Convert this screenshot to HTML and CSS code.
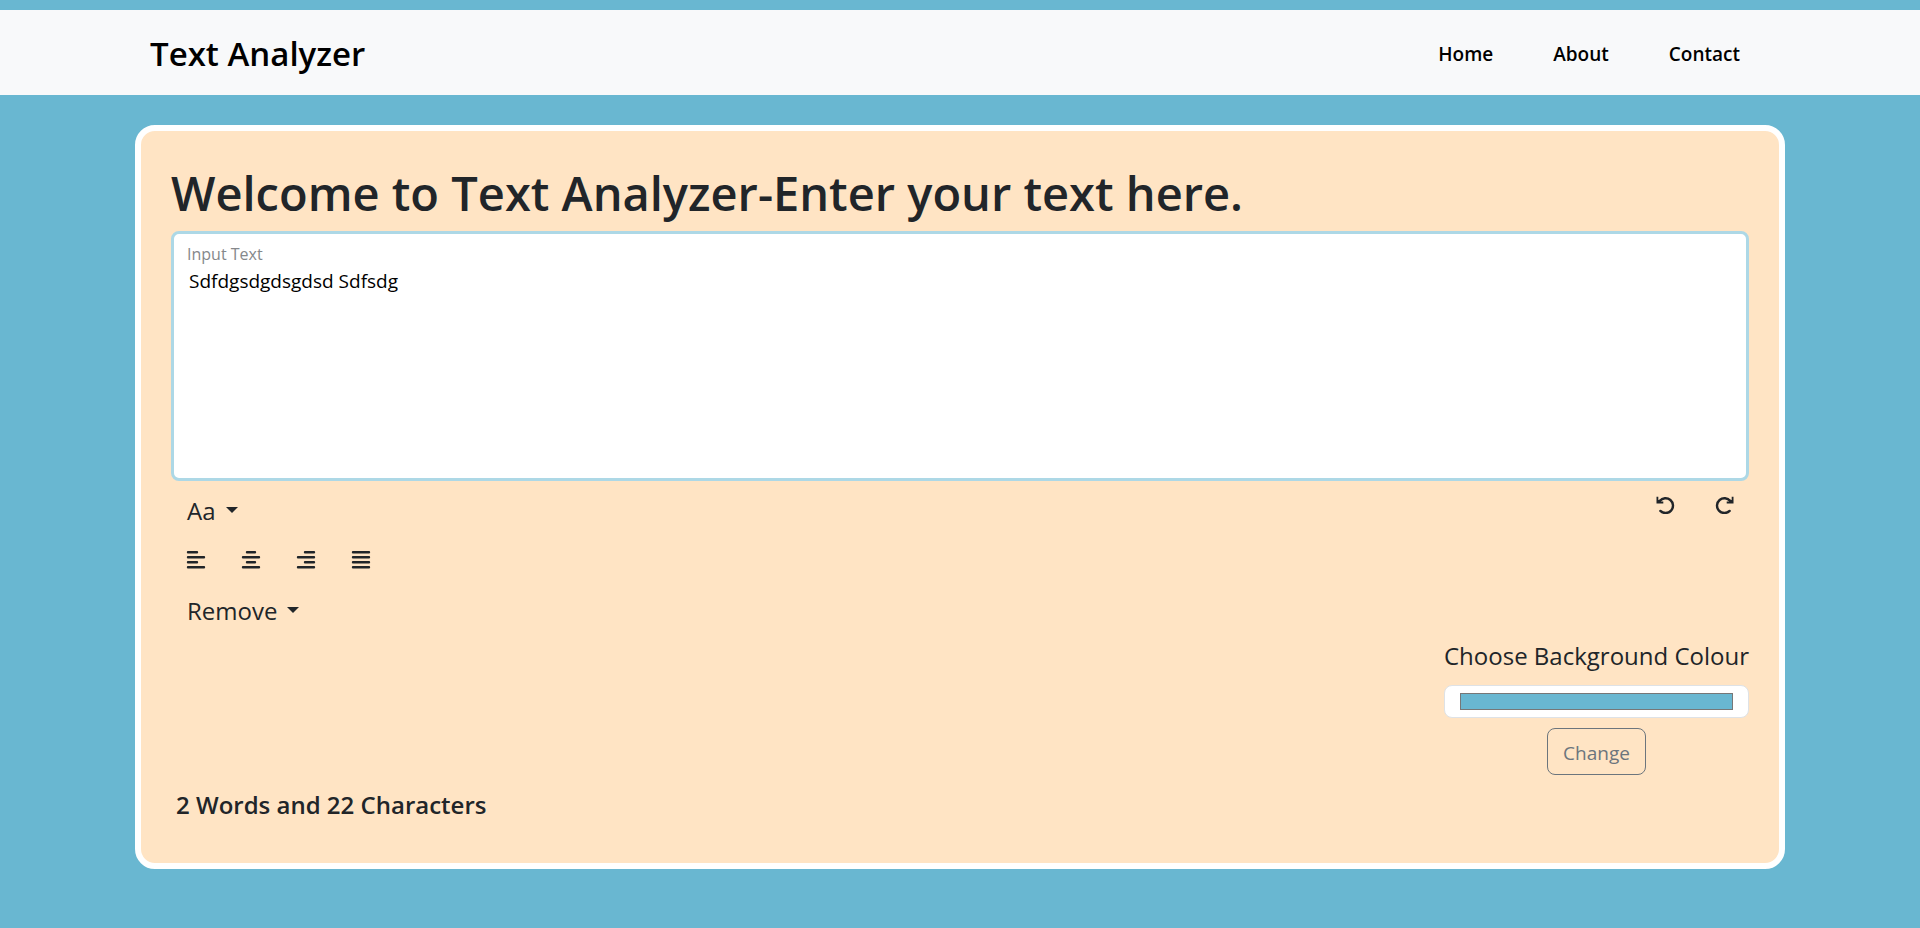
FILE: index.html
```html
<!DOCTYPE html>
<html lang="en">
<head>
<meta charset="utf-8">
<meta name="viewport" content="width=device-width, initial-scale=1">
<title>Text Analyzer</title>
<link rel="stylesheet" href="styles.css">
</head>
<body>
<header class="navbar">
  <div class="container navbar-inner">
    <a class="brand" href="#">Text Analyzer</a>
    <nav class="nav-links">
      <a href="#">Home</a>
      <a href="#">About</a>
      <a href="#">Contact</a>
    </nav>
  </div>
</header>
<main class="container card">
  <h1 class="title">Welcome to Text Analyzer-Enter your text here.</h1>
  <div class="editor">
    <label class="editor-label" for="text">Input Text</label>
    <textarea class="editor-text" id="text" spellcheck="false">Sdfdgsdgdsgdsd Sdfsdg</textarea>
  </div>
  <div class="toolbar">
    <button class="tool menu" type="button">Aa<span class="caret"></span></button>
    <div class="history">
      <button class="tool icon-btn" type="button" aria-label="Undo">
        <svg class="icon" viewBox="0 0 20 18"><path d="M3.800 5A7.400 7.400 0 1 1 4.400 14.900"/><path class="fill" d="M0.500 0.800H2.300V4L4.800 3.600V5.600H7.300V7.600H0.500Z"/></svg>
      </button>
      <button class="tool icon-btn" type="button" aria-label="Redo">
        <svg class="icon" viewBox="0 0 20 18"><g transform="matrix(-1 0 0 1 20 0)"><path d="M3.800 5A7.400 7.400 0 1 1 4.400 14.900"/><path class="fill" d="M0.500 0.800H2.300V4L4.800 3.600V5.600H7.300V7.600H0.500Z"/></g></svg>
      </button>
    </div>
  </div>
  <div class="align-row">
    <button class="tool icon-btn" type="button" aria-label="Align left"><svg class="icon" viewBox="0 0 20 18"><path d="M2 1.200h9M2 6.200h16M2 11.200h9M2 16.200h16"/></svg></button>
    <button class="tool icon-btn" type="button" aria-label="Align center"><svg class="icon" viewBox="0 0 20 18"><path d="M6 1.200h8M2 6.200h16M6 11.200h8M2 16.200h16"/></svg></button>
    <button class="tool icon-btn" type="button" aria-label="Align right"><svg class="icon" viewBox="0 0 20 18"><path d="M9 1.200h9M2 6.200h16M9 11.200h9M2 16.200h16"/></svg></button>
    <button class="tool icon-btn" type="button" aria-label="Justify"><svg class="icon" viewBox="0 0 20 18"><path d="M2 1.200h16M2 6.200h16M2 11.200h16M2 16.200h16"/></svg></button>
  </div>
  <div class="remove-row">
    <button class="tool menu" type="button">Remove<span class="caret"></span></button>
  </div>
  <form class="picker">
    <label class="picker-label" for="colour">Choose Background Colour</label>
    <input class="picker-input" id="colour" type="color" value="#69b7d1">
    <button class="change" type="button">Change</button>
  </form>
  <p class="stats">2 Words and 22 Characters</p>
</main>
</body>
</html>
```
FILE: styles.css
```css
* { box-sizing: border-box; }

body {
  margin: 0;
  padding: 10px 0 30px;
  background: #69b7d1;
  color: #212529;
  font-family: "Segoe UI", "Open Sans", "Noto Sans", sans-serif;
  font-size: 19px;
}

button, input, textarea { font: inherit; color: inherit; }

.container { width: 100%; max-width: 1650px; margin: 0 auto; }

.navbar { background: #f8f9fa; padding: 11px 0 9px; }
.navbar-inner { display: flex; align-items: center; justify-content: space-between; padding: 0 15px; min-height: 65px; }
.brand { color: #000; font-size: 33px; font-weight: 600; line-height: 50px; text-decoration: none; }
.nav-links { display: flex; gap: 60px; padding-right: 30px; }
.nav-links a { color: #000; font-weight: 600; font-size: 19px; line-height: 30px; text-decoration: none; }

.card { margin-top: 30px; padding: 30px; background: #ffe4c4; border: 6px solid #fff; border-radius: 20px; }
.title { margin: 0; padding: 2px 0 8px; font-size: 47px; font-weight: 600; line-height: 60px; }

.editor { display: flex; flex-direction: column; height: 250px; padding: 6px 13px; background: #fff; border: 3px solid #add8e6; border-radius: 8px; }
.editor-label { color: #85888b; font-size: 16px; line-height: 28px; }
.editor-text { flex: 1; width: 100%; padding: 0 2px; border: 0; outline: 0; resize: none; background: transparent; color: #000; line-height: 26px; }

.toolbar { display: flex; justify-content: space-between; align-items: flex-start; padding-top: 4px; }
.tool { display: inline-flex; align-items: center; height: 50px; padding: 0 15px; border: 0; background: transparent; cursor: pointer; }
.menu { gap: 10px; padding: 0 16px; font-size: 24px; }
.caret { border: 6px solid transparent; border-top-color: #212529; border-bottom: 0; }
.icon-btn { height: 40px; padding: 0 15px; }
.icon { width: 20px; height: 18px; fill: none; stroke: #212529; stroke-width: 2.4; stroke-linecap: round; }
.icon .fill { fill: #212529; stroke: none; }
.history { display: flex; gap: 8px; }
.align-row { display: flex; gap: 5px; height: 50px; align-items: center; }
.remove-row { display: flex; }

.picker { display: flex; flex-direction: column; align-items: center; width: fit-content; margin-left: auto; }
.picker-label { padding-top: 1px; font-size: 24px; line-height: 40px; }
.picker-input { width: 100%; height: 33px; margin: 9px 0 10px; padding: 7px 15px; appearance: none; border: 1px solid #dee2e6; border-radius: 8px; background: #fff; }
.picker-input::-webkit-color-swatch-wrapper { padding: 0; }
.picker-input::-webkit-color-swatch { border: 1px solid #777; border-radius: 0; }
.change { height: 47px; padding: 2px 15px 0; border: 1px solid #6c757d; border-radius: 8px; background: transparent; color: #6c757d; }

.stats { margin: 10px 5px 8px; font-size: 24px; font-weight: 600; line-height: 40px; }
```
